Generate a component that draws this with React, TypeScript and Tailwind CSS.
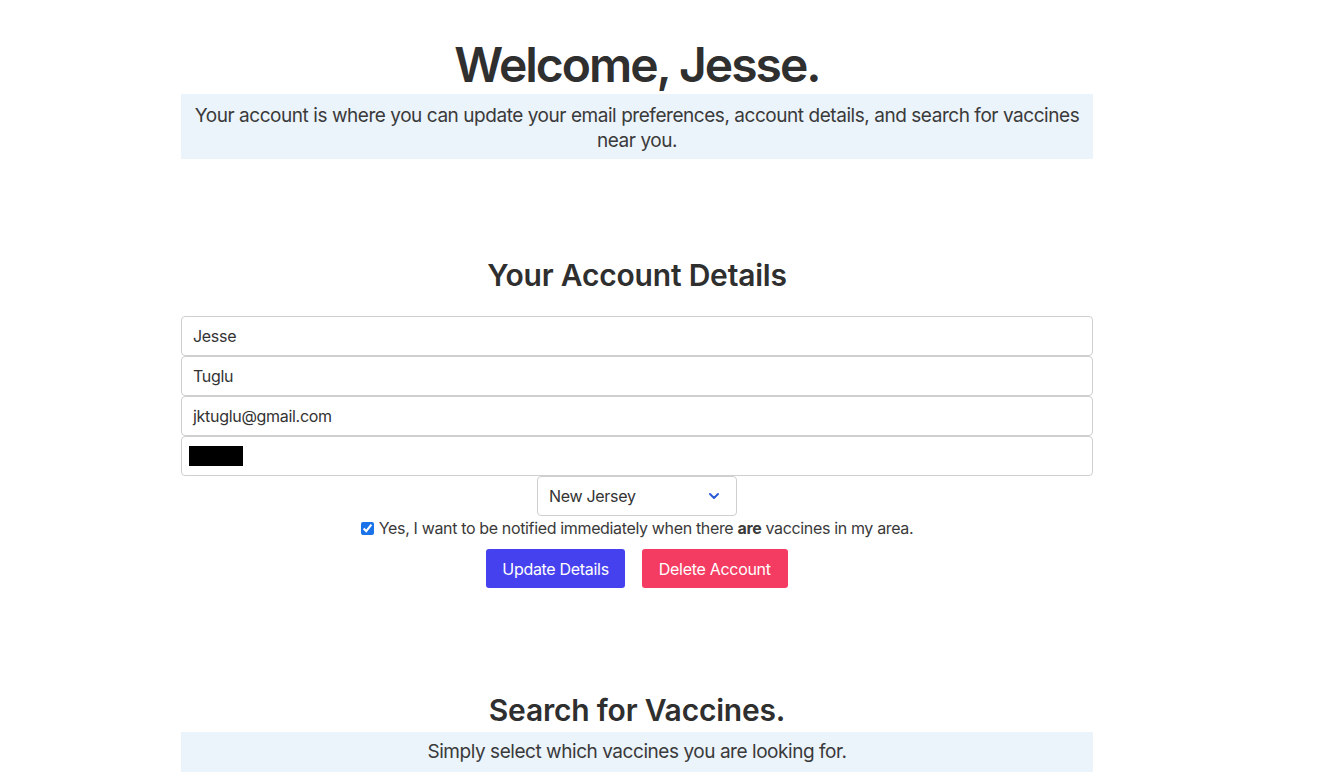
import { ChevronDown } from 'lucide-react';

const fields = ['Jesse', 'Tuglu', 'jktuglu@gmail.com'];

export default function App() {
  return (
    <div
      className="min-h-screen bg-white text-[#2f2f2f]"
      style={{ fontFamily: 'Inter, "Noto Sans", sans-serif' }}
    >
      <div className="pl-[181px]">
        <div className="w-[912px] flex flex-col items-center">
          <h1 className="mt-[36px] h-[58px] leading-[58px] text-[48px] font-semibold tracking-[-2px]">
            Welcome, Jesse.
          </h1>
          <p className="w-full bg-[#ebf3fb] px-3 pt-[9px] pb-[6px] text-center text-[19px] leading-[25px] tracking-[-0.45px] text-[#3a3a3a]">
            Your account is where you can update your email preferences, account details, and search for vaccines
            near you.
          </p>

          <h2 className="mt-[96px] text-[30px] font-semibold leading-[40px] tracking-[-0.2px]">
            Your Account Details
          </h2>

          <div className="mt-[21px] w-full flex flex-col">
            {fields.map((f) => (
              <div
                key={f}
                className="h-[40px] rounded-[4px] border border-[#cfcfcf] px-[11px] flex items-center text-[16px] tracking-[-0.3px] text-[#333]"
              >
                {f}
              </div>
            ))}
            <div className="h-[40px] rounded-[4px] border border-[#cfcfcf] px-[7px] flex items-center">
              <div className="w-[54px] h-[20px] bg-black" />
            </div>
          </div>

          <div className="w-[200px] h-[40px] rounded-[4px] border border-[#cfcfcf] flex items-center justify-between pl-[11px] pr-[14px] text-[16px] tracking-[-0.3px] text-[#333]">
            <span>New Jersey</span>
            <ChevronDown className="w-[16px] h-[16px] text-[#2a5bd7]" strokeWidth={3} />
          </div>

          <label className="mt-[2px] flex items-center gap-[5px] text-[16px] leading-[20px] tracking-[-0.35px] text-[#3a3a3a]">
            <input type="checkbox" defaultChecked className="w-[13px] h-[13px] accent-[#1a73e8]" />
            <span>
              Yes, I want to be notified immediately when there <b>are</b> vaccines in my area.
            </span>
          </label>

          <div className="mt-[11px] flex gap-[17px]">
            <button className="h-[39px] px-[16px] rounded-[3px] bg-[#4641ee] text-white text-[16px] tracking-[-0.3px]">
              Update Details
            </button>
            <button className="h-[39px] px-[17px] rounded-[3px] bg-[#f43c62] text-white text-[16px] tracking-[-0.3px]">
              Delete Account
            </button>
          </div>

          <h2 className="mt-[102px] text-[30px] font-semibold leading-[40px] tracking-[-0.2px]">
            Search for Vaccines.
          </h2>
          <p className="mt-[2px] w-full bg-[#ebf3fb] h-[40px] flex items-center justify-center text-[19px] tracking-[-0.45px] text-[#3a3a3a]">
            Simply select which vaccines you are looking for.
          </p>
        </div>
      </div>
    </div>
  );
}
